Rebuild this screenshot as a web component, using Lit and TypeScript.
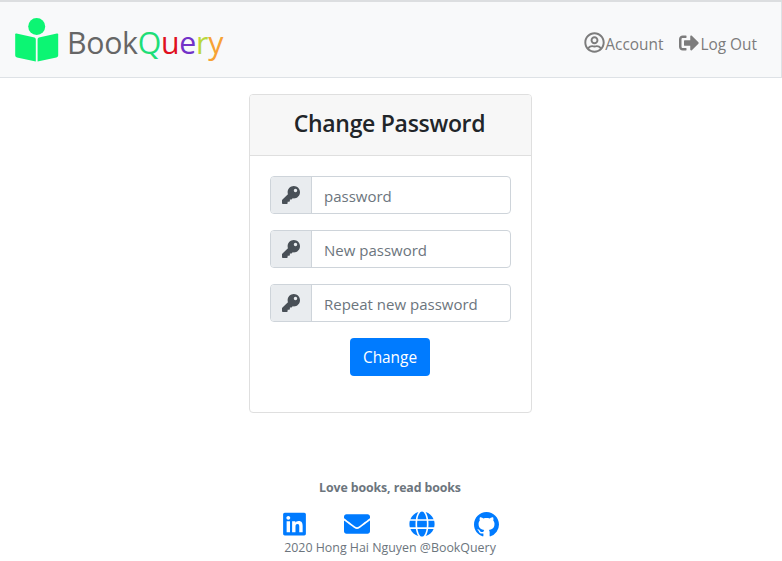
import { LitElement, html, css, svg } from "lit";
import { customElement } from "lit/decorators.js";

const KEY = "M512 176.001C512 273.203 433.202 352 336 352c-11.22 0-22.19-1.062-32.827-3.069l-24.012 27.014A23.999 23.999 0 0 1 261.223 384H224v40c0 13.255-10.745 24-24 24h-40v40c0 13.255-10.745 24-24 24H24c-13.255 0-24-10.745-24-24v-78.059c0-6.365 2.529-12.47 7.029-16.971l161.802-161.802C163.108 213.814 160 195.271 160 176 160 78.798 238.797.001 335.999 0 433.488-.001 512 78.511 512 176.001zM336 128c0 26.51 21.49 48 48 48s48-21.49 48-48-21.49-48-48-48-48 21.49-48 48z";
const USER = "M248 104c-53 0-96 43-96 96s43 96 96 96 96-43 96-96-43-96-96-96zm0 144c-26.5 0-48-21.5-48-48s21.5-48 48-48 48 21.5 48 48-21.5 48-48 48zm0-240C111 8 0 119 0 256s111 248 248 248 248-111 248-248S385 8 248 8zm0 448c-49.7 0-95.1-18.3-130.1-48.4 14.9-23 40.4-38.6 69.6-39.5 20.8 6.4 40.6 9.6 60.5 9.6s39.7-3.1 60.5-9.6c29.2 1 54.7 16.5 69.6 39.5-35 30.1-80.4 48.4-130.1 48.4zm162.7-84.1c-24.4-31.4-62.1-51.9-105.1-51.9-10.2 0-26 9.6-57.6 9.6-31.5 0-47.4-9.6-57.6-9.6-42.9 0-80.6 20.5-105.1 51.9C61.9 339.2 48 299.2 48 256c0-110.3 89.7-200 200-200s200 89.7 200 200c0 43.2-13.9 83.2-37.3 115.9z";
const LOGOUT = "M497 273L329 441c-15 15-41 4.5-41-17v-96H152c-13.3 0-24-10.7-24-24v-96c0-13.3 10.7-24 24-24h136V88c0-21.4 25.9-32 41-17l168 168c9.3 9.4 9.3 24.6 0 34zM192 436v-40c0-6.6-5.4-12-12-12H96c-17.7 0-32-14.3-32-32V160c0-17.7 14.3-32 32-32h84c6.6 0 12-5.4 12-12V76c0-6.6-5.4-12-12-12H96c-53 0-96 43-96 96v192c0 53 43 96 96 96h84c6.6 0 12-5.4 12-12z";
const LINKEDIN = "M416 32H31.9C14.3 32 0 46.5 0 64.3v383.4C0 465.5 14.3 480 31.9 480H416c17.6 0 32-14.5 32-32.3V64.3c0-17.8-14.4-32.3-32-32.3zM135.4 416H69V202.2h66.5V416zm-33.2-243c-21.3 0-38.5-17.3-38.5-38.5S80.9 96 102.2 96c21.2 0 38.5 17.3 38.5 38.5 0 21.3-17.2 38.5-38.5 38.5zm282.1 243h-66.4V312c0-24.8-.5-56.7-34.5-56.7-34.6 0-39.9 27-39.9 54.9V416h-66.4V202.2h63.7v29.2h.9c8.9-16.8 30.6-34.5 62.9-34.5 67.2 0 79.7 44.3 79.7 101.9V416z";
const ENVELOPE = "M502.3 190.8c3.9-3.1 9.7-.2 9.7 4.7V400c0 26.5-21.5 48-48 48H48c-26.5 0-48-21.5-48-48V195.6c0-5 5.7-7.8 9.7-4.7 22.4 17.4 52.1 39.5 154.1 113.6 21.1 15.4 56.7 47.8 92.2 47.6 35.7.3 72-32.8 92.3-47.6 102-74.1 131.6-96.3 154-113.7zM256 320c23.2.4 56.6-29.2 73.4-41.4 132.7-96.3 142.8-104.7 173.4-128.7 5.8-4.5 9.2-11.5 9.2-18.9v-19c0-26.5-21.5-48-48-48H48C21.5 64 0 85.5 0 112v19c0 7.4 3.4 14.3 9.2 18.9 30.6 23.9 40.7 32.4 173.4 128.7 16.8 12.2 50.2 41.8 73.4 41.4z";
const GLOBE = "M336.5 160C322 70.7 287.8 8 248 8s-74 62.7-88.5 152h177zM152 256c0 22.2 1.2 43.5 3.3 64h185.3c2.1-20.5 3.3-41.8 3.3-64s-1.2-43.5-3.3-64H155.3c-2.1 20.5-3.3 41.8-3.3 64zm324.7-96c-28.6-67.9-86.5-120.4-158-141.6 24.4 33.8 41.2 84.7 50 141.6h108zM177.2 18.4C105.8 39.6 47.8 92.1 19.3 160h108c8.7-56.9 25.5-107.8 49.9-141.6zM487.4 192H372.7c2.1 21 3.3 42.5 3.3 64s-1.2 43-3.3 64h114.6c5.5-20.5 8.6-41.8 8.6-64s-3.1-43.5-8.5-64zM120 256c0-21.5 1.2-43 3.3-64H8.6C3.2 212.5 0 233.8 0 256s3.2 43.5 8.6 64h114.6c-2-21-3.2-42.5-3.2-64zm39.5 96c14.5 89.3 48.7 152 88.5 152s74-62.7 88.5-152h-177zm159.3 141.6c71.4-21.2 129.4-73.7 158-141.6h-108c-8.8 56.9-25.6 107.8-50 141.6zM19.3 352c28.6 67.9 86.5 120.4 158 141.6-24.4-33.8-41.2-84.7-50-141.6h-108z";
const GITHUB = "M8 0C3.58 0 0 3.58 0 8c0 3.54 2.29 6.53 5.47 7.59.4.07.55-.17.55-.38 0-.19-.01-.82-.01-1.49-2.01.37-2.53-.49-2.69-.94-.09-.23-.48-.94-.82-1.13-.28-.15-.68-.52-.01-.53.63-.01 1.08.58 1.23.82.72 1.21 1.87.87 2.33.66.07-.52.28-.87.51-1.07-1.78-.2-3.64-.89-3.64-3.95 0-.87.31-1.59.82-2.15-.08-.2-.36-1.02.08-2.12 0 0 .67-.21 2.2.82.64-.18 1.32-.27 2-.27.68 0 1.36.09 2 .27 1.53-1.04 2.2-.82 2.2-.82.44 1.1.16 1.92.08 2.12.51.56.82 1.27.82 2.15 0 3.07-1.87 3.75-3.65 3.95.29.25.54.73.54 1.48 0 1.07-.01 1.93-.01 2.2 0 .21.15.46.55.38A8.013 8.013 0 0016 8c0-4.42-3.58-8-8-8z";

const icon = (d: string, vb: string, cls: string) =>
  html`<svg class=${cls} viewBox=${vb} aria-hidden="true">${svg`<path fill="currentColor" d=${d}></path>`}</svg>`;

@customElement("app-root")
export class AppRoot extends LitElement {
  static styles = css`
    :host {
      display: block;
      font-family: "Open Sans", "Noto Sans", sans-serif;
      color: #212529;
      background: #fff;
    }
    .page {
      display: flex;
      flex-direction: column;
      align-items: center;
      height: 561px;
      overflow: hidden;
      border-top: 2px solid #dcdee0;
      box-sizing: border-box;
      padding-right: 1px;
    }
    .nav {
      align-self: stretch;
      margin-right: -1px;
      height: 76px;
      box-sizing: border-box;
      background: #f8f9fa;
      border-bottom: 1px solid #dee2e6;
      border-right: 1px solid #dee2e6;
      display: flex;
      align-items: center;
      justify-content: space-between;
      padding: 0 24px 0 15px;
    }
    .brand {
      display: flex;
      align-items: center;
      gap: 7px;
      font-size: 30.3px;
      letter-spacing: -0.3px;
      color: #666;
      margin-top: 5px;
    }
    .logo { width: 45px; height: 45px; margin-top: -3px; display: block; }
    .links { display: flex; gap: 16px; font-size: 15.4px; color: #7c7c7c; margin-top: 9px; }
    .link { display: flex; align-items: center; }
    .i-user { width: 21px; height: 21px; margin-top: -3px; }
    .i-out { width: 20px; height: 20px; margin-top: -3px; margin-right: 1px; }
    .q { color: #1ede78; } .u { color: #e0101e; } .e { color: #7232c8; } .r { color: #b9d83a; } .y { color: #f7a234; }
    .card {
      margin-top: 16px;
      width: 283px;
      height: 319px;
      box-sizing: border-box;
      border: 1px solid #dfdfdf;
      border-radius: 4px;
      overflow: hidden;
    }
    .head {
      height: 61px;
      box-sizing: border-box;
      background: #f7f7f7;
      border-bottom: 1px solid #dfdfdf;
      display: flex;
      align-items: center;
      justify-content: center;
      font-size: 23px;
      font-weight: 600;
      letter-spacing: -0.3px;
      margin: 0;
      padding: 0 2px 4px 0;
    }
    .body {
      padding: 20px 20px 0;
      display: flex;
      flex-direction: column;
      gap: 16px;
    }
    .group {
      height: 38px;
      display: flex;
      box-sizing: border-box;
      border: 1px solid #ced4da;
      border-radius: 4px;
      overflow: hidden;
    }
    .pre {
      width: 41px;
      flex: none;
      background: #e9ecef;
      border-right: 1px solid #ced4da;
      box-sizing: border-box;
      display: flex;
      align-items: center;
      justify-content: center;
      color: #495057;
    }
    .i-key { width: 18px; height: 18px; margin-top: -1px; margin-right: 0; }
    .field {
      flex: 1;
      padding: 2px 0 0 12px;
      box-sizing: border-box;
      display: flex;
      align-items: center;
      color: #6c757d;
      font-size: 15px;
    }
    .btn {
      align-self: center;
      width: 80px;
      height: 38px;
      margin-right: 1px;
      border-radius: 4px;
      border: 0;
      background: #007bff;
      color: #fff;
      font: inherit;
      font-size: 15.4px;
      padding: 0;
    }
    .foot {
      margin: 66px 1px 0 0;
      display: flex;
      flex-direction: column;
      align-items: center;
      color: #6c757d;
    }
    .tag { font-size: 12.35px; font-weight: 700; line-height: 18px; letter-spacing: -0.1px; }
    .socials { display: flex; align-items: center; margin-top: 14px; height: 26px; color: #007bff; }
    .s { width: 64px; display: flex; justify-content: center; }
    .i-li { width: 23px; height: 26px; }
    .i-mail { width: 26px; height: 26px; margin-right: 3px; }
    .i-globe { width: 26px; height: 26px; }
    .i-gh { width: 25px; height: 25px; }
    .copy { font-size: 12.4px; line-height: 18px; margin-top: 2px; }
  `;

  private row(ph: string) {
    return html`<div class="group">
      <div class="pre">${icon(KEY, "0 0 512 512", "i-key")}</div>
      <div class="field">${ph}</div>
    </div>`;
  }

  render() {
    return html`<div class="page">
      <nav class="nav">
        <div class="brand">
          <svg class="logo" viewBox="0 0 45 45" aria-hidden="true">
            <circle cx="21.7" cy="8.5" r="8.5" fill="#0cf573"></circle>
            <path fill="#0cf573" d="M1.500 15.500 19.500 19.500a2 2 0 0 1 1.300 1.900V43.500L2 39.500A2 2 0 0 1 .2 37.600V16.800a1 1 0 0 1 1.300-1.300z"></path>
            <path fill="#0cf573" d="M41.900 15.500 23.900 19.500a2 2 0 0 0-1.300 1.900V43.500L41.400 39.500a2 2 0 0 0 1.800-1.900V16.800a1 1 0 0 0-1.300-1.300z"></path>
          </svg>
          <span>Book<span class="q">Q</span><span class="u">u</span><span class="e">e</span><span class="r">r</span><span class="y">y</span></span>
        </div>
        <div class="links">
          <span class="link">${icon(USER, "0 0 496 512", "i-user")}Account</span>
          <span class="link">${icon(LOGOUT, "0 0 512 512", "i-out")}Log Out</span>
        </div>
      </nav>
      <section class="card">
        <h1 class="head">Change Password</h1>
        <div class="body">
          ${this.row("password")}
          ${this.row("New password")}
          ${this.row("Repeat new password")}
          <button class="btn">Change</button>
        </div>
      </section>
      <footer class="foot">
        <div class="tag">Love books, read books</div>
        <div class="socials">
          <span class="s">${icon(LINKEDIN, "0 0 448 512", "i-li")}</span>
          <span class="s">${icon(ENVELOPE, "0 0 512 512", "i-mail")}</span>
          <span class="s">${icon(GLOBE, "0 0 496 512", "i-globe")}</span>
          <span class="s">${icon(GITHUB, "0 0 16 16", "i-gh")}</span>
        </div>
        <div class="copy">2020 Hong Hai Nguyen @BookQuery</div>
      </footer>
    </div>`;
  }
}
